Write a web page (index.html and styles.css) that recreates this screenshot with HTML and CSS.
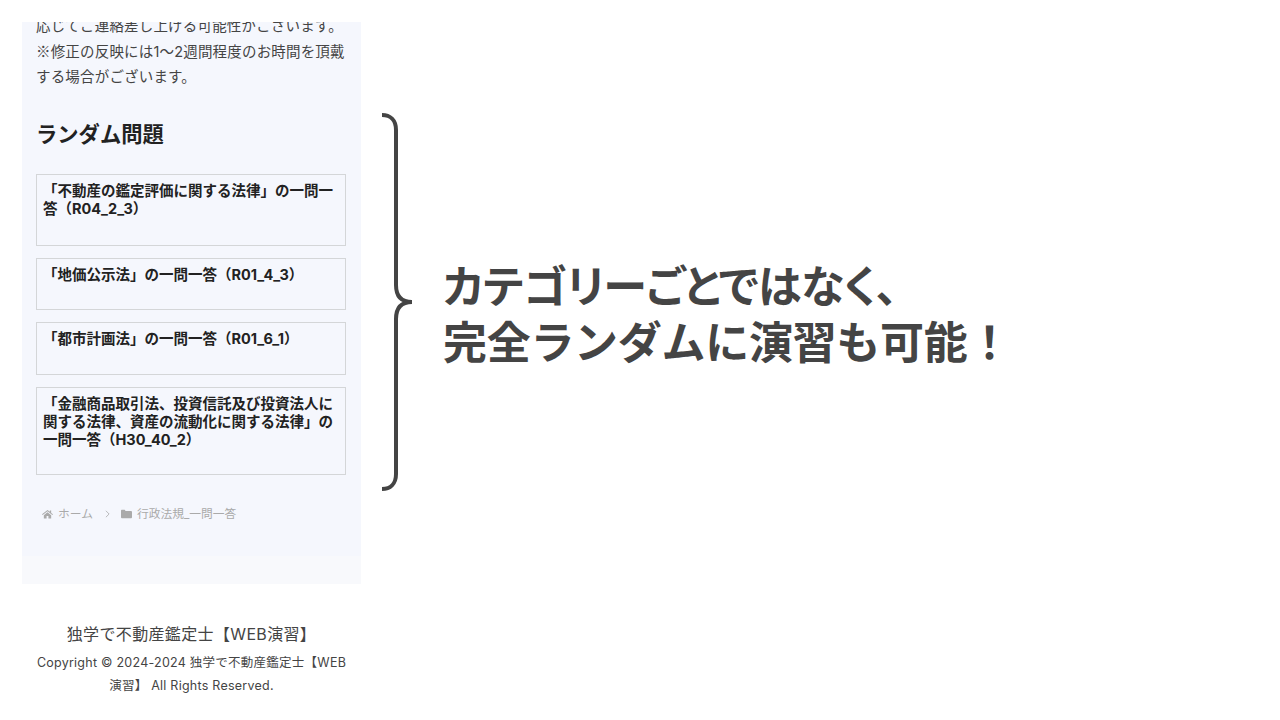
FILE: index.html
```html
<!DOCTYPE html>
<html lang="ja">
<head>
<meta charset="UTF-8">
<title>ランダム問題</title>
<link rel="stylesheet" href="styles.css">
</head>
<body>
<div class="page">
  <div class="phone">
    <div class="panel">
      <div class="content">
        <p class="notice">応じてご連絡差し上げる可能性がございます。<br><span class="mark">※</span>修正の反映には1〜2週間程度のお時間を頂戴する場合がございます。</p>
        <h2 class="heading">ランダム問題</h2>
        <div class="cards">
          <a class="card card-two">「不動産の鑑定評価に関する法律」の一問一答（R04_2_3）</a>
          <a class="card card-one">「地価公示法」の一問一答（R01_4_3）</a>
          <a class="card card-one">「都市計画法」の一問一答（R01_6_1）</a>
          <a class="card card-three">「金融商品取引法、投資信託及び投資法人に関する法律、資産の流動化に関する法律」の一問一答（H30_40_2）</a>
        </div>
        <div class="crumbs">
          <svg class="crumb-icon" viewBox="0 0 12 10"><path d="M6 .6 0 5.400l.7.8L6 2l5.300 4.200.7-.8-2-1.600V1.200H8.600v1.300zM2 6.300V10h3V7.300h2V10h3V6.300L6 3.100z"/></svg>
          <span>ホーム</span>
          <svg class="crumb-sep" viewBox="0 0 6 10"><path d="M1 1l4 4-4 4"/></svg>
          <svg class="crumb-icon" viewBox="0 0 12 10"><path d="M0 1.500C0 .8.500.4 1 .4h3l1 1.300h6c.6 0 1 .4 1 1V8.600c0 .6-.4 1-1 1H1c-.6 0-1-.4-1-1z"/></svg>
          <span>行政法規_一問一答</span>
        </div>
      </div>
    </div>
    <div class="footer">
      <div class="site-name">独学で不動産鑑定士【WEB演習】</div>
      <div class="copyright">Copyright © 2024-2024 独学で不動産鑑定士【WEB演習】 All Rights Reserved.</div>
    </div>
  </div>
  <svg class="brace" viewBox="0 0 34 378"><path d="M1 2C9 2 15 7 15 17V172C15 183 20 189 31 189C20 189 15 195 15 206V361C15 371 9 376 1 376"/></svg>
  <div class="callout"><span class="callout-first">カテゴリーごとではなく、</span><br><span class="callout-second">完全ランダムに演習も可能！</span></div>
</div>
</body>
</html>
```
FILE: styles.css
```css
body { margin: 0; background: #fff; font-family: Inter, "Noto Sans CJK JP", sans-serif; color: #333; }

.page { display: flex; width: 1280px; height: 720px; overflow: hidden; padding-left: 22px; box-sizing: border-box; }

.phone { width: 339px; flex: none; padding-top: 22px; }

.panel { height: 562px; background: #f8f9fc; overflow: hidden; }
.content { height: 543px; background: #f5f7fd; padding: 0 15px 0 14px; box-sizing: border-box; }

.notice { margin: -9px 0 0; font-size: 14.500px; line-height: 25px; letter-spacing: .18px; color: #444; }
.mark { font-family: "Noto Sans CJK JP", sans-serif; }

.heading { margin: 30px 0 0; font-size: 21.300px; line-height: 30px; font-weight: bold; color: #222; }

.cards { display: flex; flex-direction: column; gap: 12px; margin-top: 25px; }
.card { display: block; box-sizing: border-box; padding: 7px 6px 0; border: 1px solid #d4d6d8; font-size: 14.500px; line-height: 18px; font-weight: bold; color: #222; }
.card-one { height: 52.500px; }
.card-two { height: 71.500px; }
.card-three { height: 88px; }

.crumbs { display: flex; align-items: center; margin-top: 30.500px; padding-left: 6px; font-size: 11.750px; line-height: 18px; color: #aaa; }
.crumbs span { margin-left: 5px; }
.crumb-icon { width: 11px; height: 10px; fill: #aaa; }
.crumb-sep { width: 5px; height: 8px; margin: 0 11px 0 12px; fill: none; stroke: #aaa; stroke-width: 1; }

.footer { padding: 38px 0 0 0; text-align: center; }
.site-name { font-size: 16px; line-height: 24px; letter-spacing: .35px; color: #444; }
.copyright { margin-top: 5px; padding: 0 14px; font-size: 12.500px; line-height: 23px; letter-spacing: .25px; color: #444; }

.brace { flex: none; width: 34px; height: 378px; margin: 113px 0 0 20px; fill: none; stroke: #444; stroke-width: 4; }

.callout { margin: 259px 0 0 28px; font-size: 44px; line-height: 56px; font-weight: bold; color: #444; white-space: nowrap; }
.callout-first { font-feature-settings: "palt"; letter-spacing: -.5px; }
.callout-second { letter-spacing: -.3px; }
```
